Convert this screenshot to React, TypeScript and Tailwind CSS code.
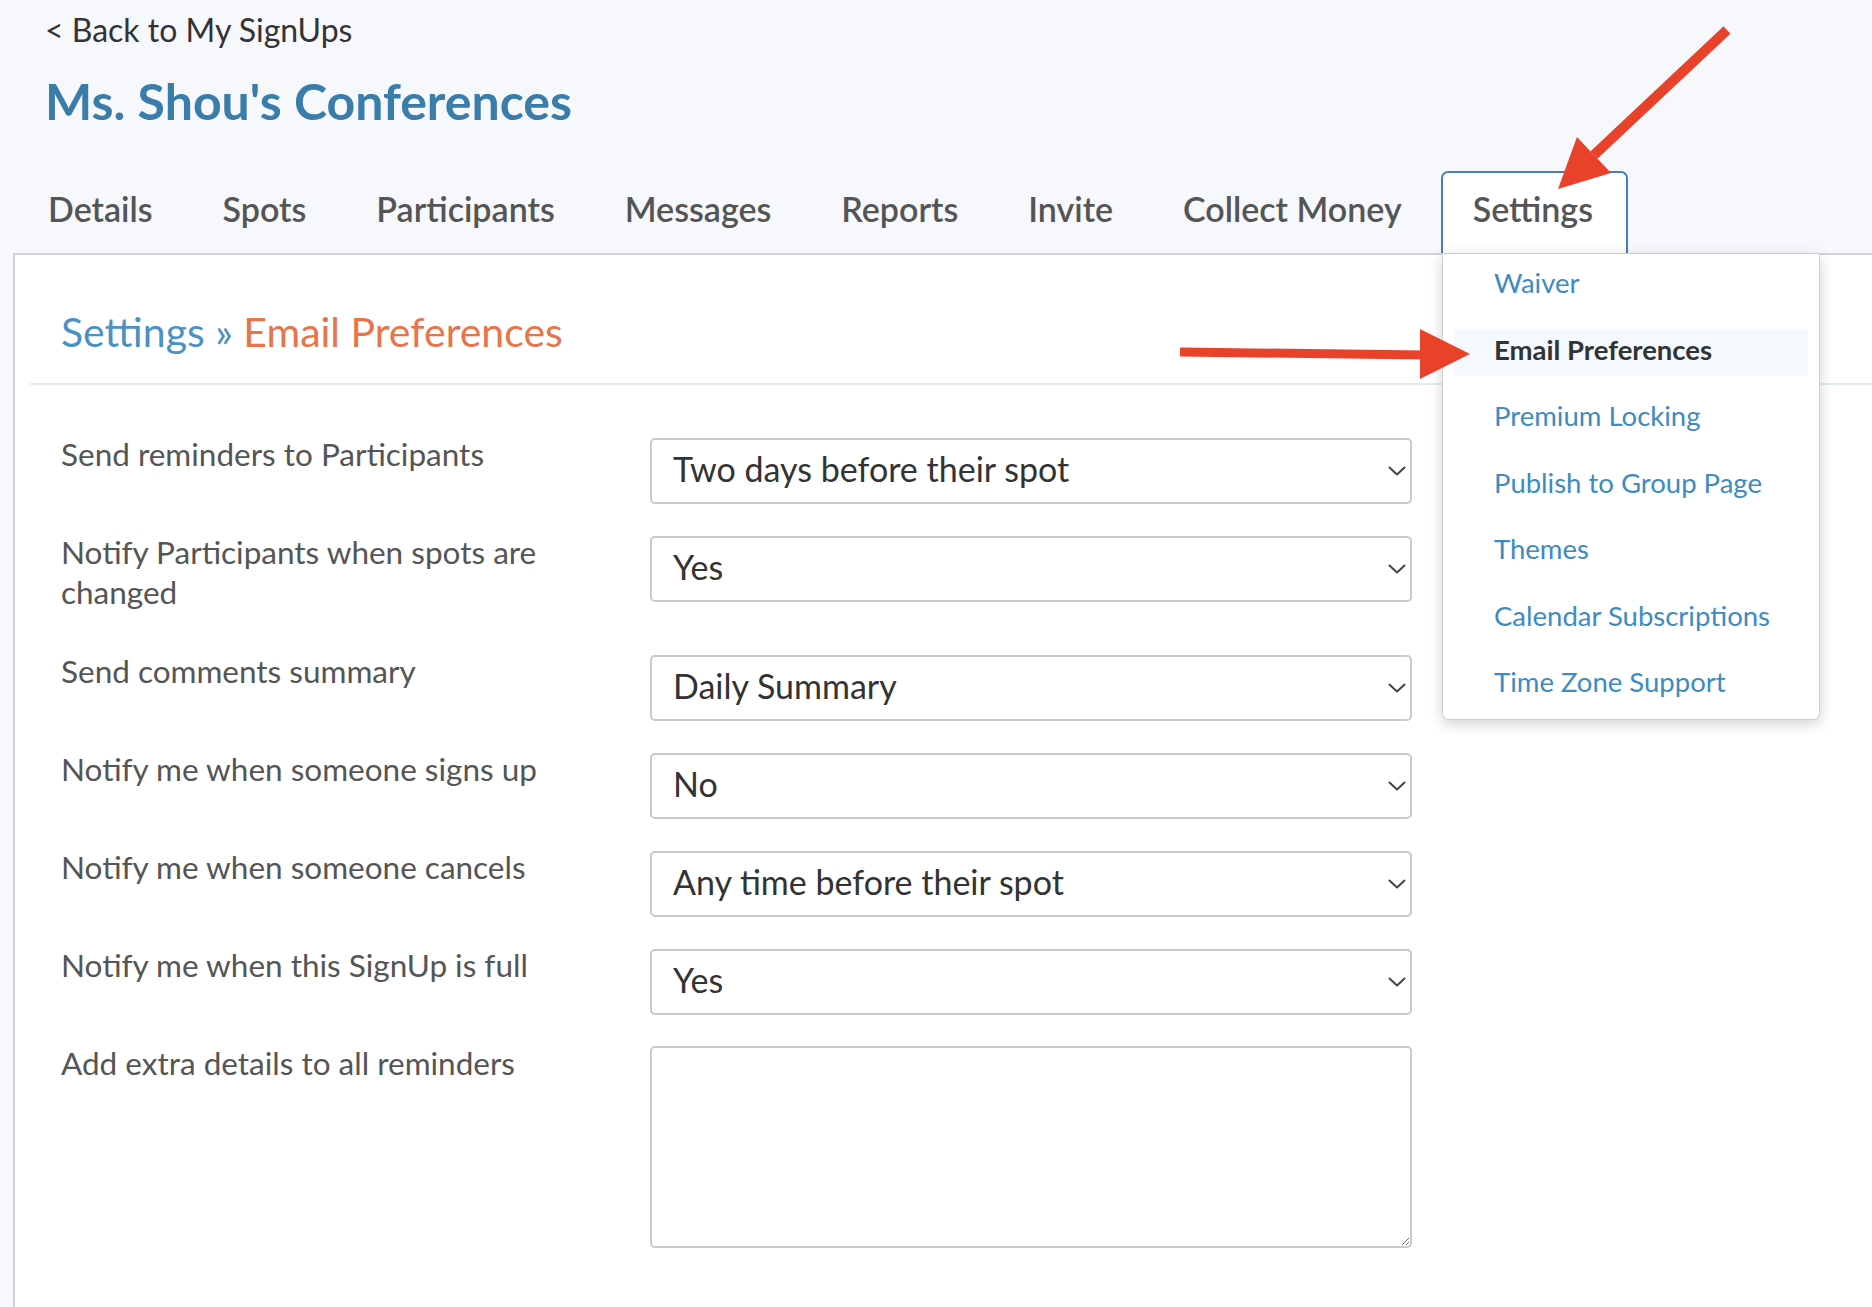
import React from "react";

const tabs = ["Details", "Spots", "Participants", "Messages", "Reports", "Invite", "Collect Money", "Settings"];

const menu = [
  "Waiver",
  "Email Preferences",
  "Premium Locking",
  "Publish to Group Page",
  "Themes",
  "Calendar Subscriptions",
  "Time Zone Support",
];

const rows: { label: string; value: string }[] = [
  { label: "Send reminders to Participants", value: "Two days before their spot" },
  { label: "Notify Participants when spots are changed", value: "Yes" },
  { label: "Send comments summary", value: "Daily Summary" },
  { label: "Notify me when someone signs up", value: "No" },
  { label: "Notify me when someone cancels", value: "Any time before their spot" },
  { label: "Notify me when this SignUp is full", value: "Yes" },
];

function Chevron() {
  return (
    <svg width="18" height="10" viewBox="0 0 18 10" className="absolute right-[4px] top-1/2 -translate-y-1/2">
      <path d="M1.5 1.5 L9 8.5 L16.5 1.5" fill="none" stroke="#444" strokeWidth="2" strokeLinecap="round" strokeLinejoin="round" />
    </svg>
  );
}

export default function App() {
  return (
    <div className="relative w-[1872px] h-[1307px] overflow-hidden bg-[#f7f8fc] font-['Lato','Open_Sans',sans-serif]">
      <div className="pl-[45px] pt-[10px]">
        <div className="text-[32px] leading-[40px] text-[#333]">&lt; Back to My SignUps</div>
        <h1 className="mt-[21px] text-[50px] leading-[60px] font-bold text-[#3a7caa]">Ms. Shou's Conferences</h1>
      </div>

      <div className="mt-[40px] ml-[17px] flex gap-[8px] h-[82px]">
        {tabs.map((t) => {
          const active = t === "Settings";
          return (
            <div
              key={t}
              className={
                active
                  ? "h-[82px] pl-[30px] pr-[33px] pt-[16px] border-2 border-b-0 border-[#4a7dbf] rounded-t-[7px] bg-white text-[34px] leading-[40px] font-semibold text-[#555]"
                  : "h-[82px] px-[29px] pt-[16px] border-2 border-b-0 border-transparent text-[34px] leading-[40px] font-semibold text-[#555]"
              }
            >
              {t}
            </div>
          );
        })}
      </div>

      <div className="ml-[13px] h-[1060px] border-l-2 border-t-2 border-[#d3d3d3] bg-white">
        <div className="pl-[46px] pt-[53px] text-[41px] leading-[48px]">
          <span className="text-[#4b91c3]">Settings » </span>
          <span className="text-[#e8744b]">Email Preferences</span>
        </div>
        <div className="ml-[15px] mt-[27px] h-[2px] bg-[#e3edf0]" />

        <div className="pl-[46px] pt-[49px]">
          {rows.map((r) => (
            <div key={r.label} className="flex items-start mb-[28px]">
              <div className="w-[589px] pb-[11px]">
                <div className="w-[560px] text-[31.5px] leading-[40px] text-[#555]">{r.label}</div>
              </div>
              <div className="relative mt-[4px] w-[762px] h-[66px] rounded-[5px] border-2 border-[#c9c9c9] bg-white pl-[21px] pb-[6px] flex items-center text-[34px] text-[#333]">
                {r.value}
                <Chevron />
              </div>
            </div>
          ))}
          <div className="flex items-start">
            <div className="w-[589px]">
              <div className="text-[31.5px] leading-[40px] text-[#555]">Add extra details to all reminders</div>
            </div>
            <textarea className="mt-[3px] w-[762px] h-[202px] rounded-[5px] border-2 border-[#c9c9c9] bg-white outline-none" />
          </div>
        </div>
      </div>

      <div className="absolute left-[1442px] top-[253px] w-[378px] h-[467px] bg-white border border-[#cfcfcf] rounded-b-[7px] shadow-[0_4px_14px_rgba(0,0,0,0.18)] pt-[9px] flex flex-col gap-[20.5px]">
        {menu.map((m) => {
          const active = m === "Email Preferences";
          return (
            <div
              key={m}
              className={
                active
                  ? "mx-[11px] h-[46px] pl-[40px] pb-[6px] flex items-center bg-[#f4f9fe] text-[27.5px] font-bold text-[#333]"
                  : "mx-[11px] h-[46px] pl-[40px] pb-[6px] flex items-center text-[27.5px] text-[#3d8bc1]"
              }
            >
              {m}
            </div>
          );
        })}
      </div>

      <svg className="absolute left-0 top-0 pointer-events-none" width="1872" height="1307">
        <line x1="1727" y1="30" x2="1594" y2="155" stroke="#e8422a" strokeWidth="10" />
        <polygon points="1558,189 1577,137 1611,173" fill="#e8422a" />
        <line x1="1180" y1="352" x2="1424" y2="355" stroke="#e8422a" strokeWidth="9" />
        <polygon points="1420,329 1470,354 1420,379" fill="#e8422a" />
      </svg>
    </div>
  );
}
